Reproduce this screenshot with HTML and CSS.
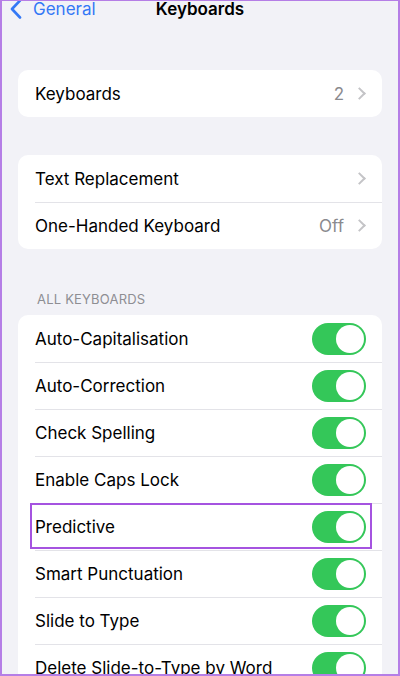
FILE: index.html
```html
<!DOCTYPE html>
<html lang="en">
<head>
    <meta charset="UTF-8">
    <meta name="viewport" content="width=device-width, initial-scale=1.0">
    <title>Keyboards</title>
    <link rel="stylesheet" href="styles.css">
</head>
<body>

    <div class="frame">
        <header class="nav">
            <a class="back" href="#">
                <svg width="12" height="20" viewBox="0 0 12 20">
                    <path d="M10 1.5 L2 10 L10 18.5" fill="none" stroke="#3478f6" stroke-width="2.6" stroke-linecap="round" stroke-linejoin="round"/>
                </svg>
                <span>General</span>
            </a>
            <h1>Keyboards</h1>
            <span></span>
        </header>

        <!-- Keyboards count -->
        <div class="card first">
            <div class="row">
                <span class="label">Keyboards</span>
                <span class="value">2</span>
                <span class="chev"></span>
            </div>
        </div>

        <!-- Replacement / one-handed -->
        <div class="card second">
            <div class="row">
                <span class="label">Text Replacement</span>
                <span class="chev"></span>
            </div>
            <div class="row">
                <span class="label">One-Handed Keyboard</span>
                <span class="value">Off</span>
                <span class="chev"></span>
            </div>
        </div>

        <p class="section-title">ALL KEYBOARDS</p>
        <div class="card">
            <div class="row">
                <span class="label">Auto-Capitalisation</span>
                <span class="toggle"></span>
            </div>
            <div class="row">
                <span class="label">Auto-Correction</span>
                <span class="toggle"></span>
            </div>
            <div class="row">
                <span class="label">Check Spelling</span>
                <span class="toggle"></span>
            </div>
            <div class="row">
                <span class="label">Enable Caps Lock</span>
                <span class="toggle"></span>
            </div>
            <div class="row marked">
                <span class="label">Predictive</span>
                <span class="toggle"></span>
            </div>
            <div class="row">
                <span class="label">Smart Punctuation</span>
                <span class="toggle"></span>
            </div>
            <div class="row">
                <span class="label">Slide to Type</span>
                <span class="toggle"></span>
            </div>
            <div class="row">
                <span class="label">Delete Slide-to-Type by Word</span>
                <span class="toggle"></span>
            </div>
        </div>
    </div>

</body>
</html>
```

FILE: styles.css
```css
body {
    margin: 0;
    font-family: Inter, "Liberation Sans", sans-serif;
    background: #f2f2f7;
    color: #000;
}

.frame {
    height: 676px;
    box-sizing: border-box;
    border: 2px solid #b57ee6;
    border-top-width: 1px;
    overflow: hidden;
}

.nav {
    display: grid;
    grid-template-columns: 1fr auto 1fr;
    align-items: center;
    height: 20px;
    margin-top: -2px;
    padding: 0 8px;
}

.back {
    display: flex;
    align-items: center;
    gap: 11px;
    color: #3478f6;
    text-decoration: none;
    font-size: 17px;
}

.nav h1 {
    margin: 0;
    font-size: 17px;
    font-weight: 600;
}

.card {
    background: #fff;
    border-radius: 10px;
    margin: 0 16px;
    overflow: hidden;
}

.card.first {
    margin-top: 51px;
}

.card.second {
    margin-top: 38px;
}

.row {
    position: relative;
    display: flex;
    align-items: center;
    height: 47px;
    padding: 0 16px 0 17px;
    font-size: 17px;
}

.row + .row::before {
    content: "";
    position: absolute;
    top: 0;
    left: 17px;
    right: 0;
    border-top: 1px solid #e3e3e8;
}

.label {
    flex: 1;
}

.value {
    color: #8a8a8e;
    margin-right: 11px;
}

.chev {
    width: 7px;
    height: 7px;
    border-top: 2px solid #c4c4c7;
    border-right: 2px solid #c4c4c7;
    transform: rotate(45deg);
    margin-right: 2px;
}

.section-title {
    margin: 42px 0 8px 35px;
    font-size: 13px;
    color: #8e8e93;
    letter-spacing: 0.2px;
}

.toggle {
    position: relative;
    width: 54px;
    height: 32px;
    border-radius: 16px;
    background: #34c759;
}

.toggle::after {
    content: "";
    position: absolute;
    top: 2px;
    right: 2px;
    width: 28px;
    height: 28px;
    border-radius: 50%;
    background: #fff;
}

.marked::after {
    content: "";
    position: absolute;
    top: 0;
    bottom: 1px;
    left: 12px;
    right: 10px;
    border: 2px solid #a553e0;
}
```
